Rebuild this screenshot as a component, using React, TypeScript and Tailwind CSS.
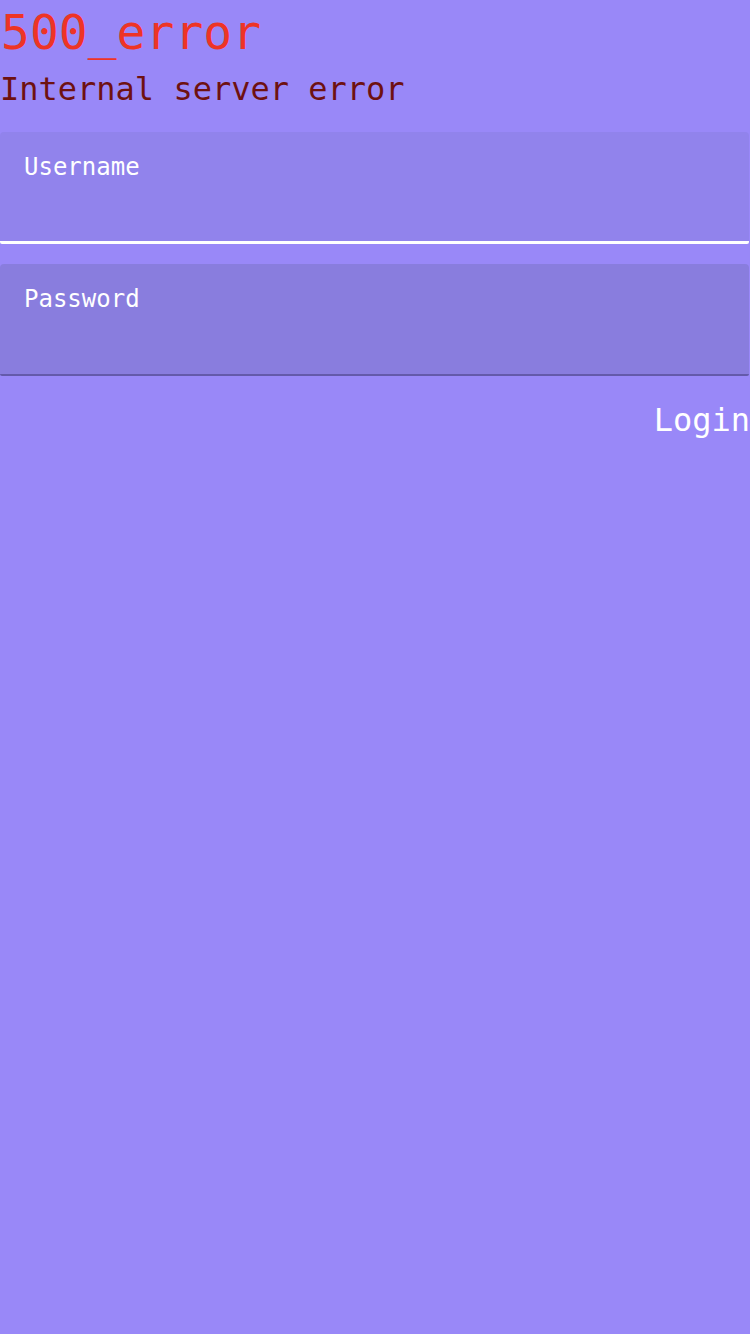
import React from "react";

export default function App() {
  return (
    <div
      className="min-h-screen w-full bg-[#9988f8]"
      style={{ fontFamily: '"DejaVu Sans Mono", "Liberation Mono", monospace' }}
    >
      <h1 className="text-[48px] leading-[64px] text-[#ee3426] pl-[1px]">500_error</h1>
      <p className="text-[32px] leading-[50px] text-[#6e1111]">Internal server error</p>
      <form className="mt-[18px] flex flex-col">
        <div className="mr-[1px] h-[112px] rounded-t-[4px] rounded-b-[2px] border-b-[3px] border-white bg-[#9183ec] px-6 pt-[20px]">
          <label className="block text-[24px] leading-[30px] text-white">Username</label>
        </div>
        <div className="mt-[20px] mr-[1px] h-[112px] rounded-t-[4px] rounded-b-[2px] border-b-[2px] border-[#645aaa] bg-[#897dde] px-6 pt-[20px]">
          <label className="block text-[24px] leading-[30px] text-white">Password</label>
        </div>
        <div className="mt-[24px] flex justify-end">
          <button type="button" className="text-[32px] leading-[40px] text-white">
            Login
          </button>
        </div>
      </form>
    </div>
  );
}
